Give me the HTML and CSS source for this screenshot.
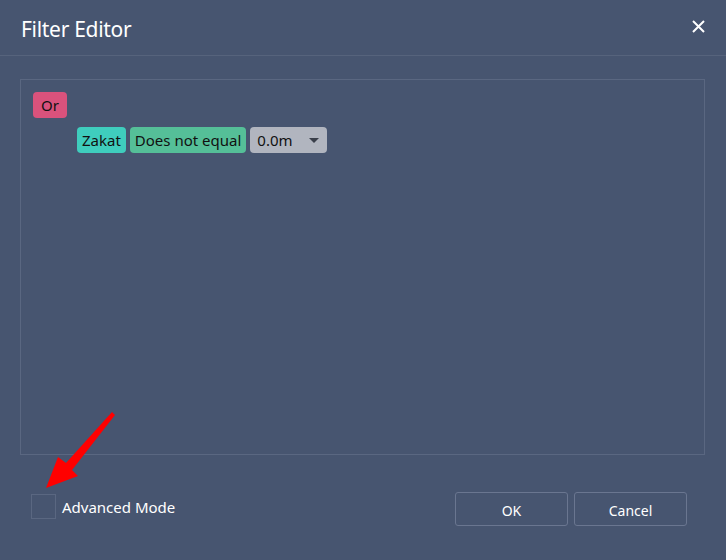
FILE: index.html
```html
<!DOCTYPE html>
<html lang="en">
  <head>
    <meta charset="UTF-8" />
    <title>Filter Editor</title>
    <link rel="stylesheet" href="styles.css">
  </head>
  <body>
    <div class="dialog">
      <div class="header">
        <h2>Filter Editor</h2>
        <svg class="close" width="13" height="13" viewBox="0 0 13 13">
          <path d="M1 1L12 12M12 1L1 12" stroke="#fff" stroke-width="2" />
        </svg>
      </div>
      <div class="content">
        <div class="panel">
          <div class="group-row">
            <span class="chip chip-or">Or</span>
          </div>
          <div class="cond-row">
            <span class="chip chip-field">Zakat</span>
            <span class="chip chip-op">Does not equal</span>
            <span class="chip chip-value">0.0m <span class="caret"></span></span>
          </div>
        </div>
        <div class="footer">
          <label class="adv">
            <span class="check"></span>
            Advanced Mode
          </label>
          <div class="buttons">
            <button>OK</button>
            <button>Cancel</button>
          </div>
        </div>
      </div>
      <svg class="arrow" width="90" height="90" viewBox="0 0 90 90">
        <polygon points="70,2 73,5 30,60 36,66 4,78 16,47 24,53" fill="#f00" />
      </svg>
    </div>
  </body>
</html>
```

FILE: styles.css
```css
body {
  margin: 0;
  background-color: #475570;
  font-family: "Noto Sans", "Open Sans", sans-serif;
}

.dialog {
  position: relative;
  width: 726px;
  height: 560px;
  overflow: hidden;
}

.header {
  height: 55px;
  border-bottom: 1px solid #56637c;
  display: flex;
  align-items: center;
  justify-content: space-between;
  padding: 0 21px 0 21px;
}

.header h2 {
  margin: 0;
  font-weight: normal;
  font-size: 21px;
  color: #fff;
  letter-spacing: -0.3px;
  padding-top: 2px;
}

.close {
  margin-bottom: 3px;
}

.content {
  padding: 23px 21px 0 20px;
}

.panel {
  box-sizing: border-box;
  height: 376px;
  border: 1px solid #5a6781;
  padding: 12px 12px;
}

.group-row {
  display: flex;
}

.cond-row {
  display: flex;
  gap: 4px;
  margin-top: 9px;
  margin-left: 44px;
}

.chip {
  display: inline-flex;
  align-items: center;
  height: 26px;
  padding: 0 5px;
  border-radius: 4px;
  font-size: 15px;
  color: #111;
}

.chip-or {
  background-color: #d9527c;
  padding: 0 8px;
}

.chip-field {
  background-color: #3fcdbd;
}

.chip-op {
  background-color: #55bf98;
}

.chip-value {
  background-color: #b1b5bf;
  width: 77px;
  box-sizing: border-box;
  justify-content: space-between;
  padding: 0 6px 0 7px;
}

.caret {
  width: 0;
  height: 0;
  border-left: 5px solid transparent;
  border-right: 5px solid transparent;
  border-top: 5px solid #3a3f4a;
  margin-right: 2px;
}

.footer {
  display: flex;
  justify-content: space-between;
  align-items: center;
  margin-top: 37px;
}

.adv {
  display: flex;
  align-items: center;
  gap: 6px;
  color: #fff;
  font-size: 15px;
  margin-left: 11px;
  margin-top: -5px;
}

.check {
  width: 23px;
  height: 23px;
  border: 1px solid #5a6781;
}

.buttons {
  display: flex;
  gap: 6px;
  margin-right: 18px;
}

button {
  width: 113px;
  height: 34px;
  background-color: #475570;
  color: #fff;
  border: 1px solid #6a7690;
  border-radius: 3px;
  font-family: "Noto Sans", "Open Sans", sans-serif;
  font-size: 14px;
  padding-top: 3px;
}

.arrow {
  position: absolute;
  left: 42px;
  top: 410px;
}
```
